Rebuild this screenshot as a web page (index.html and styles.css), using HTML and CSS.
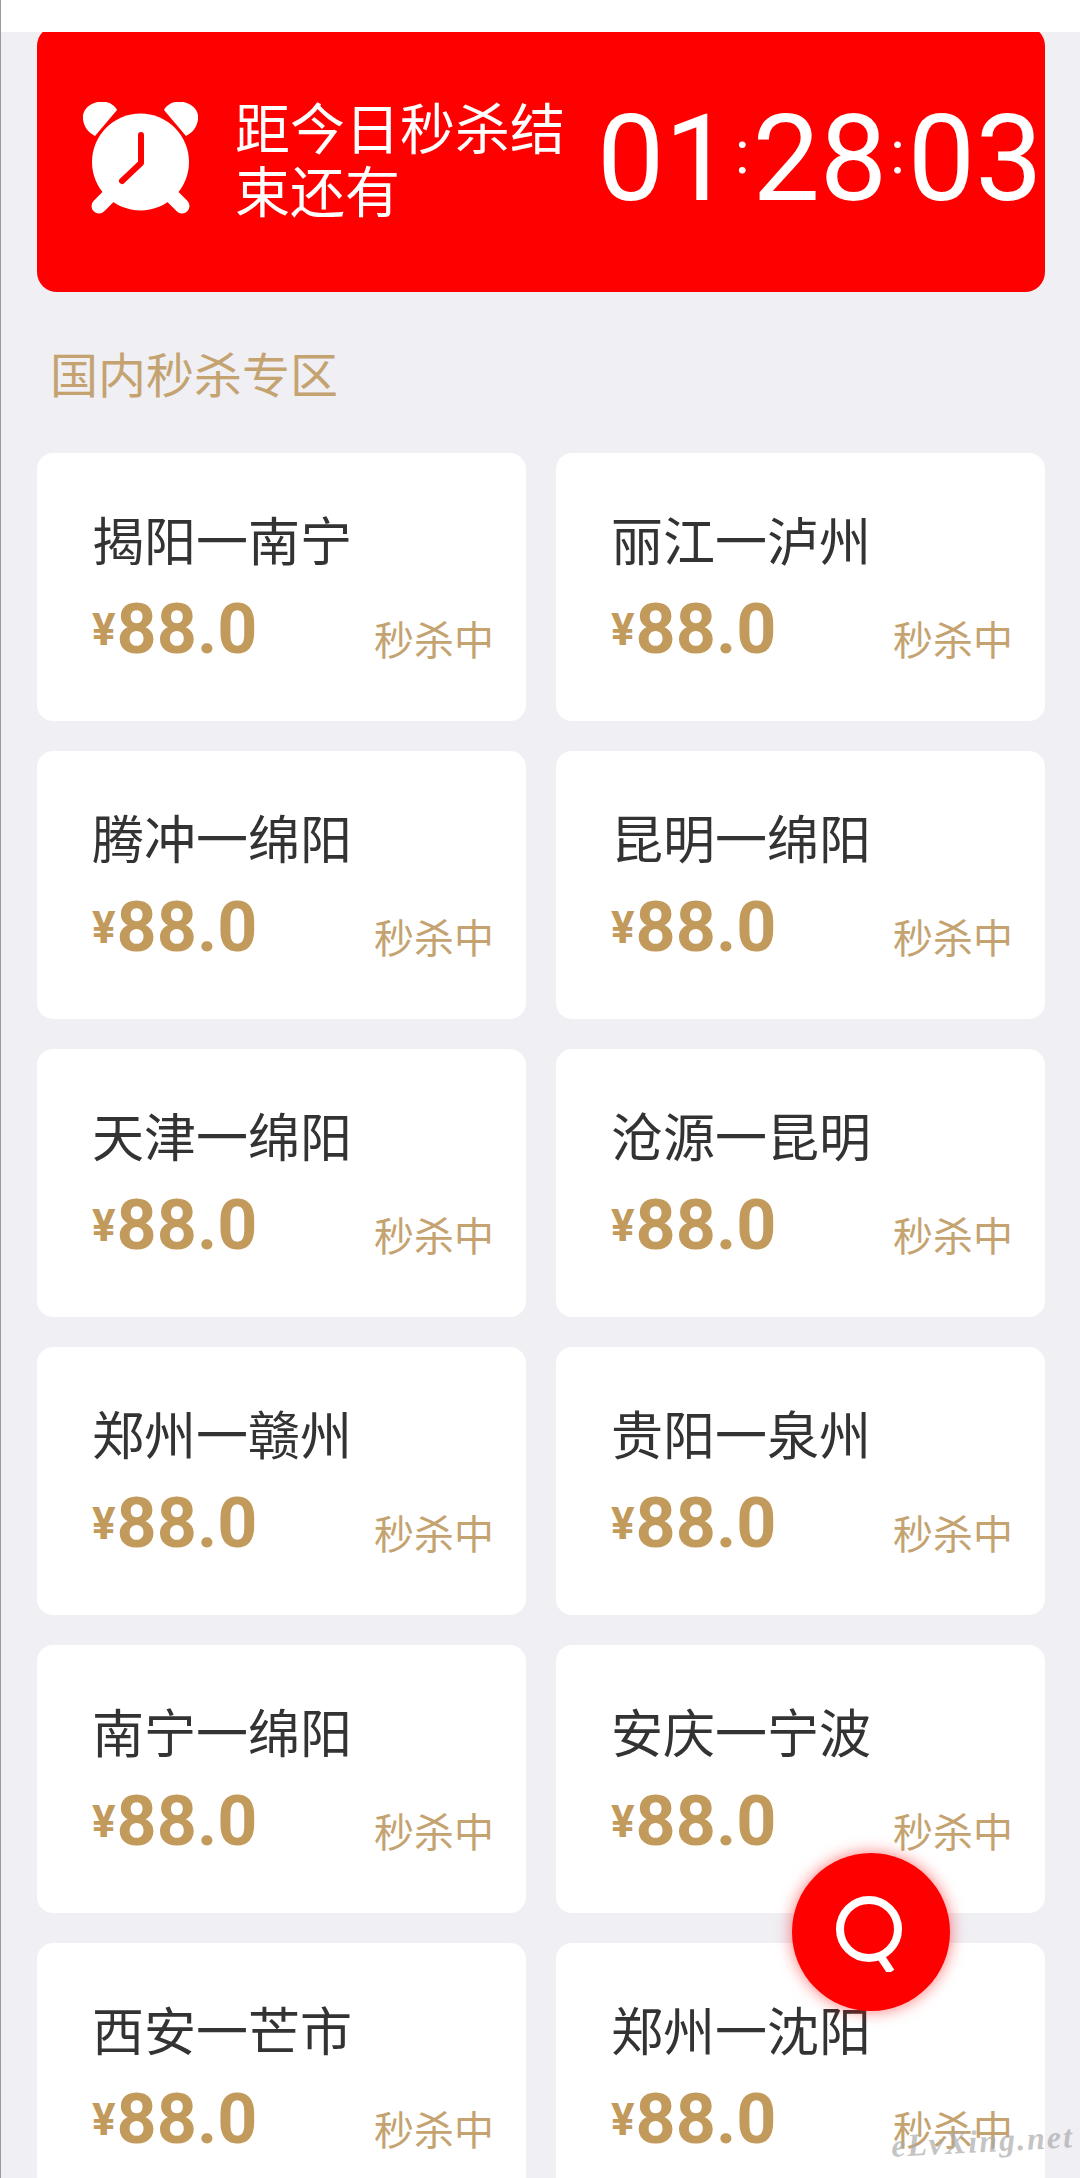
FILE: index.html
```html
<!DOCTYPE html>
<html lang="zh-CN">
<head>
  <meta charset="UTF-8" />
  <meta name="viewport" content="width=device-width, initial-scale=1.0"/>
  <title>国内秒杀专区</title>
  <link rel="stylesheet" href="styles.css">
</head>
<body>
  <div class="page">
    <header class="topbar"></header>

    <section class="countdown">
      <svg class="alarm" viewBox="0 0 115 115">
        <path class="alarm-fill" d="M12 34 C4 30 -1 22 0 13 C2 4 12 -2 23 0 C28 1 32 4 34 8 Z"/>
        <path class="alarm-fill" d="M103 34 C111 30 116 22 115 13 C113 4 103 -2 92 0 C87 1 83 4 81 8 Z"/>
        <circle class="alarm-fill" cx="57.5" cy="60" r="48.5"/>
        <path class="alarm-foot" d="M16 104 L28 92 M99 104 L87 92"/>
        <path class="alarm-hand" d="M58 33 L58 61 L39 79"/>
      </svg>
      <p class="countdown-text">距今日秒杀结束还有</p>
      <div class="timer">01<span class="sep">:</span>28<span class="sep">:</span>03</div>
    </section>

    <h2 class="zone-title">国内秒杀专区</h2>

    <div class="grid">
      <div class="card">
        <h3>揭阳一南宁</h3>
        <div class="card-row"><span class="price"><i>¥</i>88.0</span><span class="status">秒杀中</span></div>
      </div>
      <div class="card">
        <h3>丽江一泸州</h3>
        <div class="card-row"><span class="price"><i>¥</i>88.0</span><span class="status">秒杀中</span></div>
      </div>
      <div class="card">
        <h3>腾冲一绵阳</h3>
        <div class="card-row"><span class="price"><i>¥</i>88.0</span><span class="status">秒杀中</span></div>
      </div>
      <div class="card">
        <h3>昆明一绵阳</h3>
        <div class="card-row"><span class="price"><i>¥</i>88.0</span><span class="status">秒杀中</span></div>
      </div>
      <div class="card">
        <h3>天津一绵阳</h3>
        <div class="card-row"><span class="price"><i>¥</i>88.0</span><span class="status">秒杀中</span></div>
      </div>
      <div class="card">
        <h3>沧源一昆明</h3>
        <div class="card-row"><span class="price"><i>¥</i>88.0</span><span class="status">秒杀中</span></div>
      </div>
      <div class="card">
        <h3>郑州一赣州</h3>
        <div class="card-row"><span class="price"><i>¥</i>88.0</span><span class="status">秒杀中</span></div>
      </div>
      <div class="card">
        <h3>贵阳一泉州</h3>
        <div class="card-row"><span class="price"><i>¥</i>88.0</span><span class="status">秒杀中</span></div>
      </div>
      <div class="card">
        <h3>南宁一绵阳</h3>
        <div class="card-row"><span class="price"><i>¥</i>88.0</span><span class="status">秒杀中</span></div>
      </div>
      <div class="card">
        <h3>安庆一宁波</h3>
        <div class="card-row"><span class="price"><i>¥</i>88.0</span><span class="status">秒杀中</span></div>
      </div>
      <div class="card">
        <h3>西安一芒市</h3>
        <div class="card-row"><span class="price"><i>¥</i>88.0</span><span class="status">秒杀中</span></div>
      </div>
      <div class="card">
        <h3>郑州一沈阳</h3>
        <div class="card-row"><span class="price"><i>¥</i>88.0</span><span class="status">秒杀中</span></div>
      </div>
    </div>

    <button class="search-btn">
      <svg viewBox="0 0 80 80">
        <circle cx="38" cy="37" r="29"/>
        <path d="M50 65 L60 80"/>
      </svg>
    </button>

    <div class="watermark">eLvXing.net</div>
  </div>
</body>
</html>
```

FILE: styles.css
```css
* { box-sizing: border-box; margin: 0; padding: 0; }

html, body {
  height: 100%;
  overflow: hidden;
}

body {
  font-family: Roboto, "Noto Sans CJK SC", sans-serif;
  background-color: #efeff4;
  color: #333;
}

.page {
  position: relative;
  height: 2178px;
  overflow: hidden;
  padding: 0 35px 0 36px;
  border-left: 1px solid #9a9a9a;
}

.topbar {
  position: relative;
  z-index: 2;
  height: 32px;
  margin: 0 -35px 0 -36px;
  background-color: #fff;
}

/* Countdown banner */
.countdown {
  display: flex;
  align-items: center;
  height: 266px;
  margin-top: -6px;
  padding: 0 0 0 46px;
  background-color: #f00;
  border-radius: 20px;
  color: #fff;
}

.alarm {
  flex: none;
  width: 115px;
  height: 115px;
  margin-right: 37px;
}

.alarm-fill { fill: #fff; }

.alarm-foot {
  fill: none;
  stroke: #fff;
  stroke-width: 15;
  stroke-linecap: round;
}

.alarm-hand {
  fill: none;
  stroke: #f00;
  stroke-width: 6;
  stroke-linecap: round;
  stroke-linejoin: round;
}

.countdown-text {
  flex: none;
  width: 332px;
  margin-top: 5px;
  font-size: 55px;
  line-height: 63px;
}

.timer {
  flex: none;
  margin-left: 30px;
  font-size: 120px;
  line-height: 1;
  white-space: nowrap;
}

.timer .sep {
  font-size: 60px;
  vertical-align: 27px;
  margin: 0 3px;
}

.zone-title {
  margin: 55px 0 46px 13px;
  font-size: 48px;
  line-height: 60px;
  font-weight: 400;
  color: #c4a371;
}

/* Route cards */
.grid {
  display: grid;
  grid-template-columns: 1fr 1fr;
  gap: 30px;
}

.card {
  height: 268px;
  padding: 56px 32px 0 55px;
  background-color: #fff;
  border-radius: 16px;
}

.card h3 {
  font-size: 52px;
  line-height: 70px;
  font-weight: 400;
}

.card-row {
  display: flex;
  justify-content: space-between;
  align-items: flex-end;
  margin-top: 8px;
}

.price {
  font-size: 70px;
  line-height: 84px;
  font-weight: 700;
  color: #c19a5c;
}

.price i {
  font-size: 44px;
  font-style: normal;
  vertical-align: 8px;
  margin-right: 1px;
}

.status {
  font-size: 40px;
  line-height: 60px;
  color: #c4a371;
}

/* Floating search button */
.search-btn {
  position: absolute;
  top: 1853px;
  left: 791px;
  display: flex;
  align-items: center;
  justify-content: center;
  width: 158px;
  height: 158px;
  border: none;
  border-radius: 50%;
  background-color: #f00;
  box-shadow: 0 0 16px rgba(255, 0, 0, 0.55);
}

.search-btn svg {
  width: 80px;
  height: 80px;
  fill: none;
  stroke: #fff;
  stroke-width: 8;
}

.watermark {
  position: absolute;
  right: 6px;
  bottom: 18px;
  font-family: "Liberation Serif", serif;
  font-style: italic;
  font-weight: 700;
  font-size: 32px;
  letter-spacing: 2px;
  color: rgba(170, 170, 170, 0.7);
  transform: rotate(-3deg);
}
```
